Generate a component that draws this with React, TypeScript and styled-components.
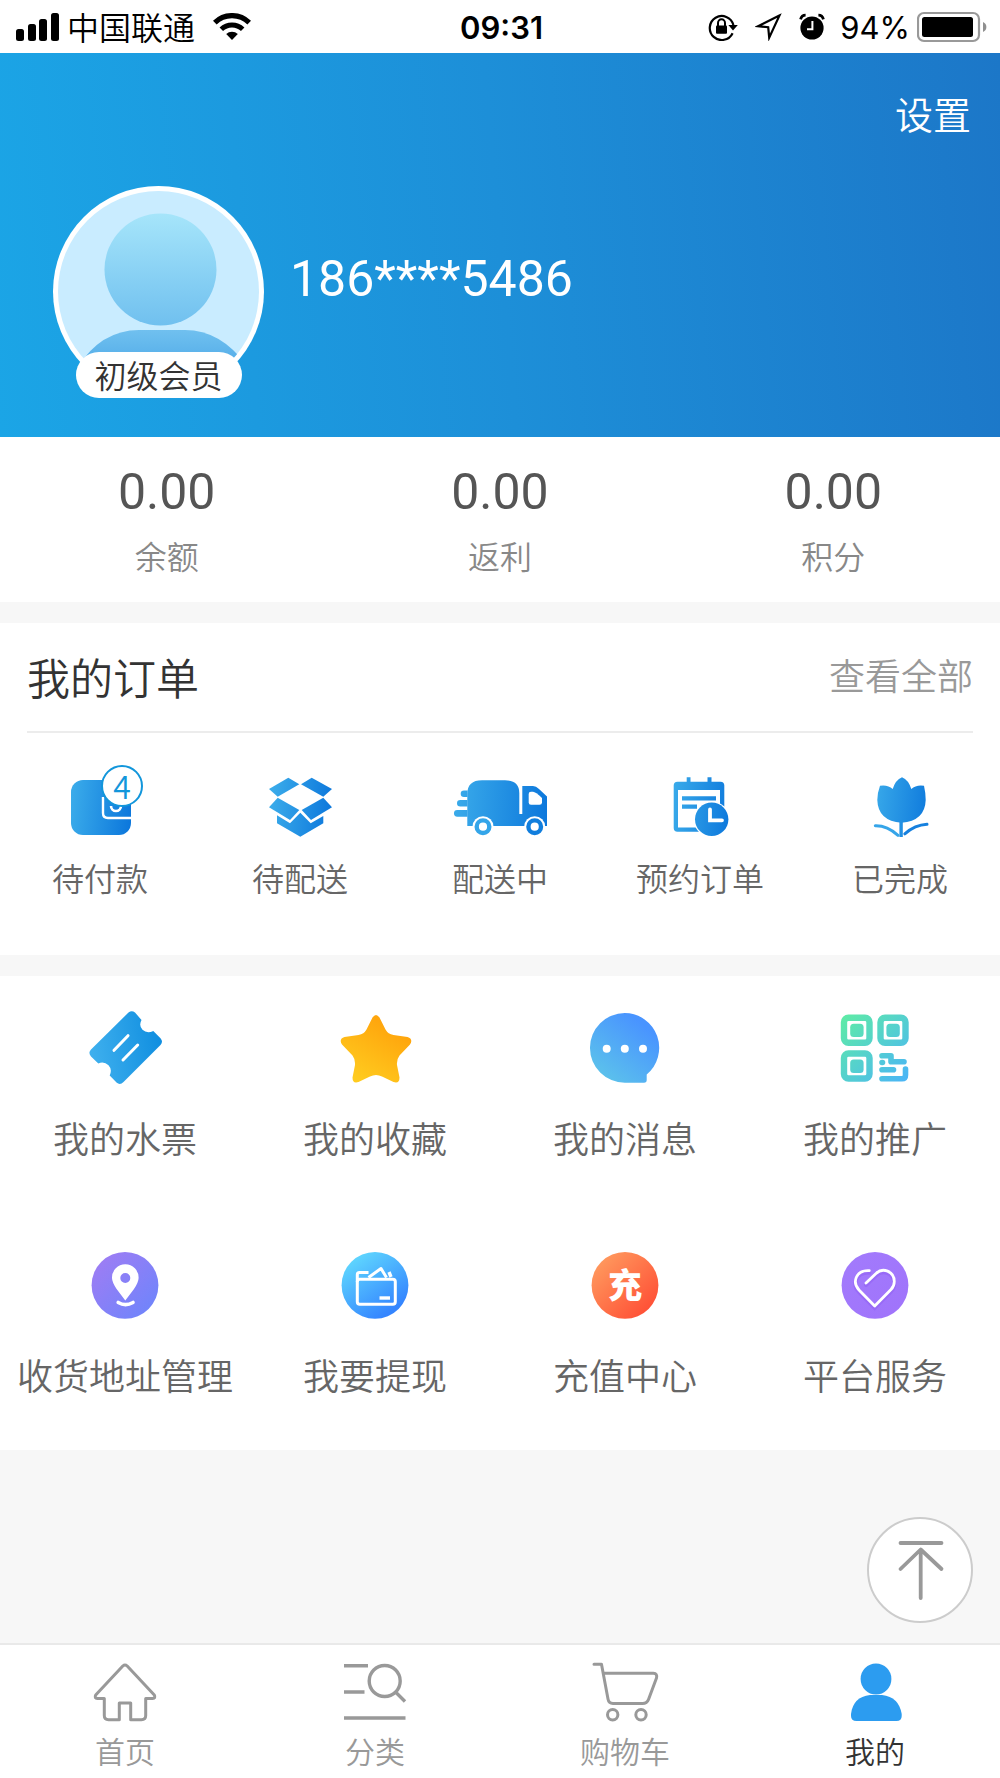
import React from "react";
import styled, { createGlobalStyle, css } from "styled-components";

const GlobalStyle = createGlobalStyle`
  *, *::before, *::after { box-sizing: border-box; }
  body {
    margin: 0;
    background: #f7f7f7;
    font-family: Inter, "Noto Sans CJK SC", sans-serif;
    color: #333;
  }
  a { color: inherit; text-decoration: none; }
  button { font: inherit; padding: 0; border: 0; background: none; cursor: pointer; }
  svg { display: block; flex: none; }
`;

const cjkLight = css`
  font-family: "Noto Sans CJK SC", sans-serif;
  font-weight: 350;
`;

const Page = styled.div`
  min-height: 100vh;
  display: flex;
  flex-direction: column;
`;

const StatusBar = styled.div`
  display: grid;
  grid-template-columns: 1fr auto 1fr;
  align-items: center;
  height: 53px;
  padding: 0 13px 0 16px;
  background: #fff;
  color: #000;
`;

const StatusGroup = styled.div<{ $end?: boolean }>`
  display: flex;
  align-items: center;
  justify-content: ${(p) => (p.$end ? "flex-end" : "flex-start")};
`;

const StatusIcons = styled.div`
  display: flex;
  align-items: center;
  gap: 17px;
`;

const Carrier = styled.span`
  ${cjkLight}
  margin: 0 18px 0 7px;
  padding-bottom: 2px;
  font-size: 32px;
  line-height: 48px;
`;

const Clock = styled.time`
  font-size: 31px;
  font-weight: 600;
  line-height: 48px;
  padding-top: 3px;
`;

const BatteryLevel = styled.span`
  margin: 3px 7px 0 15px;
  font-size: 31px;
  line-height: 48px;
`;

const Header = styled.header`
  padding: 35px 29px 40px 53px;
  background: linear-gradient(85deg, #1ba5e6 0%, #1d8fd8 50%, #1c77c8 100%);
  color: #fff;
`;

const HeaderActions = styled.div`
  display: flex;
  justify-content: flex-end;
  margin-bottom: 48px;
`;

const SettingsLink = styled.a`
  ${cjkLight}
  font-size: 38px;
  line-height: 50px;
`;

const Profile = styled.div`
  display: flex;
  align-items: center;
  gap: 26px;
`;

const Avatar = styled.div`
  position: relative;
  width: 211px;
  height: 211px;
`;

const LevelBadge = styled.span`
  ${cjkLight}
  position: absolute;
  left: 50%;
  bottom: -1px;
  transform: translateX(-50%);
  padding: 0 19px 2px;
  border-radius: 23px;
  background: #fff;
  color: #333;
  font-size: 32px;
  line-height: 44px;
  white-space: nowrap;
`;

const Phone = styled.h1`
  margin: 0;
  padding-bottom: 26px;
  font-family: Roboto, sans-serif;
  font-size: 50px;
  font-weight: 400;
  line-height: 60px;
`;

const Section = styled.section`
  background: #fff;
  margin-bottom: 21px;
`;

const Stats = styled(Section)`
  display: grid;
  grid-template-columns: repeat(3, 1fr);
  padding: 25px 0 23px;
`;

const Stat = styled.a`
  display: flex;
  flex-direction: column;
  align-items: center;
  gap: 9px;
`;

const StatValue = styled.strong`
  font-family: Roboto, sans-serif;
  font-size: 50px;
  font-weight: 400;
  line-height: 60px;
  color: #555;
`;

const StatLabel = styled.span`
  ${cjkLight}
  font-size: 32px;
  line-height: 48px;
  color: #888;
`;

const SectionHead = styled.div`
  display: flex;
  align-items: center;
  justify-content: space-between;
  margin: 0 27px;
  height: 110px;
  border-bottom: 2px solid #ececec;
`;

const SectionTitle = styled.h2`
  ${cjkLight}
  margin: 0;
  padding-bottom: 3px;
  font-size: 43px;
  line-height: 60px;
  color: #333;
`;

const MoreLink = styled.a`
  ${cjkLight}
  padding-bottom: 6px;
  font-size: 36px;
  line-height: 60px;
  color: #999;
`;

const OrderList = styled.nav`
  display: grid;
  grid-template-columns: repeat(5, 1fr);
  padding: 34px 0 56px;
`;

const OrderItem = styled.a`
  ${cjkLight}
  display: flex;
  flex-direction: column;
  align-items: center;
  gap: 8px;
  font-size: 32px;
  line-height: 44px;
  color: #666;
`;

const IconBox = styled.span`
  position: relative;
`;

const Count = styled.span`
  position: absolute;
  top: -2px;
  right: 12px;
  width: 42px;
  height: 42px;
  border: 2px solid #1296db;
  border-radius: 50%;
  background: #fff;
  color: #1296db;
  font-size: 32px;
  line-height: 36px;
  text-align: center;
`;

const ServiceList = styled(Section)`
  display: grid;
  grid-template-columns: repeat(4, 1fr);
  margin-bottom: 0;
`;

const ServiceItem = styled.a`
  ${cjkLight}
  display: flex;
  flex-direction: column;
  align-items: center;
  gap: 25px;
  padding: 32px 0 52px;
  font-size: 36px;
  line-height: 48px;
  color: #666;
  white-space: nowrap;
`;

const TopButton = styled.button`
  position: fixed;
  right: 27px;
  bottom: 155px;
  width: 106px;
  height: 106px;
  border: 2px solid #ccc;
  border-radius: 50%;
  background: #fff;
`;

const TabBar = styled.nav`
  position: sticky;
  bottom: 0;
  display: grid;
  grid-template-columns: repeat(4, 1fr);
  margin-top: auto;
  border-top: 2px solid #e9e9e9;
  background: #fff;
`;

const Tab = styled.a<{ $active?: boolean }>`
  ${cjkLight}
  display: flex;
  flex-direction: column;
  align-items: center;
  gap: 6px;
  padding: 15px 0 8px;
  font-size: 30px;
  line-height: 40px;
  color: ${(p) => (p.$active ? "#333" : "#999")};
`;

/* ---------- status bar drawings ---------- */

const SignalIcon = () => (
  <svg width="44" height="28" viewBox="0 0 44 28" aria-hidden="true">
    <rect x="0" y="16" width="8" height="12" rx="2.5" />
    <rect x="12" y="11" width="8" height="17" rx="2.5" />
    <rect x="23" y="6" width="8" height="22" rx="2.5" />
    <rect x="35" y="0" width="8" height="28" rx="2.5" />
  </svg>
);

const WifiIcon = () => (
  <svg width="38" height="28" viewBox="0 0 38 28" fill="none" stroke="#000" aria-hidden="true">
    <path d="M1.8 9.6A24.6 24.6 0 0 1 36.2 9.6" strokeWidth="5.2" />
    <path d="M8.3 16.2A15.4 15.4 0 0 1 29.7 16.2" strokeWidth="5" />
    <path d="M13.2 21A8.6 8.6 0 0 1 24.8 21L19 27Z" fill="#000" stroke="none" />
  </svg>
);

const RotationLockIcon = () => (
  <svg width="30" height="28" viewBox="0 0 30 28" aria-hidden="true">
    <path d="M24.6 20.2A12 12 0 1 1 25.4 12" fill="none" stroke="#000" strokeWidth="2.2" />
    <path d="M20.4 12H29.8L25 17.6Z" />
    <rect x="8" y="12.4" width="11" height="8.4" rx="1" />
    <path d="M10 13V10a3.5 3.8 0 0 1 7 0v3" fill="none" stroke="#000" strokeWidth="2" />
  </svg>
);

const LocationArrowIcon = () => (
  <svg width="27" height="28" viewBox="0 0 27 28" aria-hidden="true">
    <path d="M24.4 2.6L3 13.2L13.2 14.2L14.2 24.6Z" fill="none" stroke="#000" strokeWidth="2.2" />
  </svg>
);

const AlarmIcon = () => (
  <svg width="26" height="28" viewBox="0 0 26 28" aria-hidden="true">
    <circle cx="13" cy="15" r="11.6" />
    <path d="M1.6 6.4Q2.6 2.2 6.6 2.2M24.4 6.4Q23.4 2.2 19.4 2.2" fill="none" stroke="#000" strokeWidth="2.8" />
    <path d="M13.4 8V16.2H8" fill="none" stroke="#fff" strokeWidth="2" />
  </svg>
);

const BatteryIcon = () => (
  <svg width="70" height="32" viewBox="0 0 70 32" aria-hidden="true">
    <rect x="1" y="2" width="61" height="28" rx="6" fill="none" stroke="#999" strokeWidth="2.2" />
    <rect x="5" y="6" width="51" height="20" rx="2.5" />
    <path d="M66 11Q69.4 12.6 69.4 16T66 21Z" fill="#8f8f8f" />
  </svg>
);

/* ---------- avatar ---------- */

const AvatarPicture = () => (
  <svg width="211" height="211" viewBox="0 0 211 211" role="img" aria-label="头像">
    <defs>
      <linearGradient id="avatar-head" x1="0" y1="0" x2="0" y2="1">
        <stop offset="0" stopColor="#a6e5fa" />
        <stop offset="1" stopColor="#70c0ef" />
      </linearGradient>
      <linearGradient id="avatar-body" x1="0" y1="0" x2="0" y2="1">
        <stop offset="0" stopColor="#70c0ef" />
        <stop offset="0.6" stopColor="#4eaae8" />
      </linearGradient>
      <clipPath id="avatar-clip">
        <circle cx="105.5" cy="105.5" r="100.5" />
      </clipPath>
    </defs>
    <circle cx="105.5" cy="105.5" r="105.5" fill="#fff" />
    <g clipPath="url(#avatar-clip)">
      <rect width="211" height="211" fill="#c9ecff" />
      <circle cx="107.5" cy="83.5" r="56" fill="url(#avatar-head)" />
      <path d="M24 182Q48 144 86 144H132Q168 144 194 180V211H24Z" fill="url(#avatar-body)" />
    </g>
  </svg>
);

/* ---------- order icons ---------- */

const OrderSvg = ({ id, children }: { id: string; children: React.ReactNode }) => (
  <svg width="110" height="80" viewBox="0 0 110 80" fill={`url(#${id})`} aria-hidden="true">
    <defs>
      <linearGradient id={id} gradientUnits="userSpaceOnUse" x1={id === "g-truck" ? 9 : 26} y1="36" x2={id === "g-truck" ? 102 : 86} y2="42">
        <stop offset="0" stopColor="#3aabea" />
        <stop offset="1" stopColor="#0d78dc" />
      </linearGradient>
    </defs>
    {children}
  </svg>
);

const WalletIcon = () => (
  <OrderSvg id="g-wallet">
    <rect x="26" y="13" width="60" height="55" rx="12" />
    <path d="M86 51H63Q58 51 58 46V30" fill="none" stroke="#fff" strokeWidth="2.4" />
    <path d="M66 39A5 5 0 0 0 76 39" fill="none" stroke="#fff" strokeWidth="2.6" />
  </OrderSvg>
);

const BoxIcon = () => (
  <OrderSvg id="g-box">
    <path d="M43.3 10.7L54.3 17.3L32.7 29.7L24 22Z" />
    <path d="M66.7 10.7L87 22L78.3 29.7L56 17.3Z" />
    <path d="M32.7 30.7L54.3 43L45 53L24 40.3Z" />
    <path d="M78.3 30.7L87 40.3L66 53L56.7 43Z" />
    <path d="M32 48.3L45 56.3L55.3 45.7L65.7 56.3L78.3 49V56.3L55.3 69.7L32 56.3Z" />
  </OrderSvg>
);

const TruckIcon = () => (
  <OrderSvg id="g-truck">
    <path d="M22.3 59V27Q22.3 13.3 37 13.3H60Q74.3 13.3 74.3 26V47H77.3V19H88Q91 19 94 22L102 29.5V59Z" />
    <path d="M22.5 23.4H19A3.3 3.3 0 0 0 19 30H22.5V33H15.3A3.3 3.3 0 0 0 15.3 39.6H22.5V43H12.3A3.3 3.3 0 0 0 12.3 49.7H22.5Z" />
    <path d="M83.7 27Q83.7 24.7 86 24.7H88Q90.5 24.7 97 31V35.5Q97 37.700 94.5 37.7H86Q83.7 37.7 83.7 35.5Z" fill="#fff" />
    <circle cx="38" cy="59.7" r="10.5" fill="#fff" />
    <circle cx="89.7" cy="59.7" r="10.5" fill="#fff" />
    <circle cx="38" cy="59.7" r="6.3" fill="none" stroke="#34a5e9" strokeWidth="4.4" />
    <circle cx="89.7" cy="59.7" r="6.3" fill="none" stroke="#117edd" strokeWidth="4.4" />
  </OrderSvg>
);

const CalendarIcon = () => (
  <OrderSvg id="g-cal">
    <path
      fillRule="evenodd"
      d="M32.5 14.7H41.7V10.3H45.5V14.7H62.5V10.3H66.5V14.7H75.5Q79.3 14.7 79.3 18.5V61Q79.3 64.7 75.5 64.7H32.5Q28.7 64.7 28.7 61V18.5Q28.7 14.7 32.5 14.7ZM33 23V60.5H75V23Z"
    />
    <path d="M37 29.3H71V33.5H37ZM37 37.6H52V41.8H37Z" />
    <circle cx="66.7" cy="52.3" r="18" fill="#fff" />
    <circle cx="66.7" cy="52.3" r="16.7" />
    <path d="M65 42.5V53.3H77" fill="none" stroke="#fff" strokeWidth="3.8" strokeLinecap="round" />
  </OrderSvg>
);

const TulipIcon = () => (
  <OrderSvg id="g-tulip">
    <path d="M35 18.7Q43 17.5 47.7 22Q50.5 13 57 10.3Q63.5 13 66.3 22Q71 17.5 79 18.7Q80.7 26 80.7 33Q80 54 56.5 55.7Q33 54 32.3 33Q32.3 26 35 18.7Z" />
    <path d="M54.4 55H57.8V70H54.4Z" />
    <path d="M30.3 58.8Q42 58.5 53 68.3" fill="none" stroke="#36a5e9" strokeWidth="3" strokeLinecap="round" />
    <path d="M82 57.3Q70 58 59.8 66.8" fill="none" stroke="#1680de" strokeWidth="3" strokeLinecap="round" />
  </OrderSvg>
);

/* ---------- service icons ---------- */

type ServiceSvgProps = {
  id: string;
  from: string;
  to: string;
  dir?: [number, number, number, number];
  children: React.ReactNode;
};

const ServiceSvg = ({ id, from, to, dir = [25, 15, 75, 65], children }: ServiceSvgProps) => (
  <svg width="100" height="80" viewBox="0 0 100 80" fill={`url(#${id})`} aria-hidden="true">
    <defs>
      <linearGradient id={id} gradientUnits="userSpaceOnUse" x1={dir[0]} y1={dir[1]} x2={dir[2]} y2={dir[3]}>
        <stop offset="0" stopColor={from} />
        <stop offset="1" stopColor={to} />
      </linearGradient>
    </defs>
    {children}
  </svg>
);

const TicketIcon = () => (
  <ServiceSvg id="s-ticket" from="#3fb0ee" to="#118fe0" dir={[15, 45, 85, 34]}>
    <path d="M53.5 4.5Q56.7 1.8 60 4.5L66.5 12Q63.5 17.5 67.5 21.8Q72 26 78.3 23L85.5 30.2Q88.5 33.5 85.5 37L48.5 74Q45 77.5 41.5 74.5L34.7 67.5Q37.5 61.5 33.5 57.3Q29 53 23.3 55.5L16 48.5Q12.8 44.7 16 41.5Z" />
    <path d="M39 42.3L53 27.7M48 52L62.7 37" fill="none" stroke="#fff" strokeWidth="3" strokeLinecap="round" />
  </ServiceSvg>
);

const StarIcon = () => (
  <ServiceSvg id="s-star" from="#ffa60d" to="#ffcb1f" dir={[66, 20, 34, 72]}>
    <path d="M47.500 9.500Q51 4.500 54.500 9.500L60.500 21.500Q63 26 68.500 27L82.500 29Q88.500 31 85 36.500L74.500 47.500Q71.500 51.500 72 57L74.500 69.500Q74.500 76 68.500 74L57 68.500Q51 65.500 45 68.500L33.500 74Q27.500 76 27.500 69.500L30 57Q30.500 51.500 27.500 47.500L17 36.500Q13.500 31 19.500 29L33.500 27Q39 26 41.500 21.500Z" />
  </ServiceSvg>
);

const MessageIcon = () => (
  <ServiceSvg id="s-msg" from="#4994ff" to="#5bc0ec" dir={[70, 18, 30, 68]}>
    <path d="M49.8 5A34.8 34.8 0 0 1 71.7 66.5V72Q71.7 74.7 69 74.7H49.8A34.8 34.8 0 0 1 49.8 5Z" />
    <circle cx="31.7" cy="40.7" r="4" fill="#fff" />
    <circle cx="49.8" cy="40.7" r="4" fill="#fff" />
    <circle cx="68" cy="40.7" r="4" fill="#fff" />
  </ServiceSvg>
);

const QrIcon = () => (
  <ServiceSvg id="s-qr" from="#5eeaa8" to="#4bb6f5" dir={[18, 10, 80, 72]}>
    <g fill="none" stroke="url(#s-qr)" strokeWidth="6.4">
      <rect x="19" y="9.7" width="25.5" height="25" rx="4.5" />
      <rect x="55.5" y="9.7" width="25" height="25" rx="4.5" />
      <rect x="19" y="45.5" width="25.5" height="25" rx="4.5" />
    </g>
    <rect x="25.2" y="15.7" width="13.4" height="13.4" rx="3.5" />
    <rect x="61.4" y="15.7" width="13.4" height="13.4" rx="3.5" />
    <rect x="25.2" y="51.6" width="13.4" height="13.4" rx="3.5" />
    <g fill="none" stroke="url(#s-qr)" strokeWidth="5.6" strokeLinecap="round" strokeLinejoin="round">
      <path d="M57 47.8H66V53.8H79" />
      <path d="M57 54.5H57.5M57 61.8H68.5" />
      <path d="M57 70.8H77Q80.5 70.8 80.5 67V61" />
    </g>
  </ServiceSvg>
);

const AddressIcon = () => (
  <ServiceSvg id="s-addr" from="#9c7df4" to="#7184fb">
    <circle cx="50" cy="40.3" r="33.4" />
    <path
      fillRule="evenodd"
      d="M50.3 19.3A13.3 13.3 0 0 1 63.6 33Q63.6 37 59 44L50.3 55.5L41.6 44Q37 37 37 33A13.3 13.3 0 0 1 50.3 19.3ZM50.3 28A5 5 0 1 0 50.3 38A5 5 0 1 0 50.3 28Z"
      fill="#fff"
    />
    <path d="M43.2 57.5Q50.5 61.8 58 57.5" fill="none" stroke="#fff" strokeWidth="3.6" strokeLinecap="round" />
  </ServiceSvg>
);

const WithdrawIcon = () => (
  <ServiceSvg id="s-draw" from="#5dd3fe" to="#3485ff" dir={[30, 15, 66, 66]}>
    <circle cx="50" cy="40.3" r="33.4" />
    <g fill="none" stroke="#fff" strokeWidth="3" strokeLinejoin="round">
      <rect x="32.3" y="34.3" width="38" height="25" rx="2.5" />
      <path d="M32.3 37V29.5Q32.3 27.5 34.5 27.5H43.5" />
      <path d="M43.5 32.5L56 23.5L61.5 32.5" />
      <path d="M64 27L66 32" strokeWidth="3.4" />
      <path d="M54.5 53H65" strokeWidth="3.4" />
    </g>
  </ServiceSvg>
);

const RechargeIcon = () => (
  <ServiceSvg id="s-charge" from="#ff985d" to="#ff5036">
    <circle cx="50" cy="40.3" r="33.4" />
    <text x="50" y="53" textAnchor="middle" fill="#fff" fontFamily="Noto Sans CJK SC, sans-serif" fontSize="34" fontWeight="900">
      充
    </text>
  </ServiceSvg>
);

const HeartIcon = () => (
  <ServiceSvg id="s-heart" from="#a27afc" to="#a074fb">
    <circle cx="50" cy="40.3" r="33.4" />
    <path
      d="M41 40L51 30.500C57.5 24 69.3 28 69.3 38.500C69.3 42 68 44.500 66 46.500L49.7 63L34 47C27 39.500 30.500 27 44.300 27.700"
      fill="none"
      stroke="#9262f4"
      strokeWidth="4"
      strokeLinecap="round"
      opacity="0.6"
    />
    <path
      d="M41 38L51 28.5C57.5 22 69.3 26 69.3 36.5C69.3 40 68 42.5 66 44.5L49.7 61L34 45C27 37.5 30.5 25 44.3 25.7"
      fill="none"
      stroke="#fff"
      strokeWidth="2.8"
      strokeLinecap="round"
      strokeLinejoin="round"
    />
  </ServiceSvg>
);

/* ---------- tab icons ---------- */

const TabSvg = ({ children }: { children: React.ReactNode }) => (
  <svg
    width="80"
    height="64"
    viewBox="0 0 80 64"
    fill="none"
    stroke="#999"
    strokeWidth="3"
    strokeLinecap="round"
    strokeLinejoin="round"
    aria-hidden="true"
  >
    {children}
  </svg>
);

const HomeIcon = () => (
  <TabSvg>
    <path d="M37.8 6Q40 4 42.2 6L69.3 35Q71 38.3 67.5 38.5H60.7V55.5Q60.7 59.7 56.5 59.7H45.7V43H34.3V59.7H23.5Q19.3 59.7 19.3 55.5V38.5H12.5Q9 38.3 10.7 35Z" />
  </TabSvg>
);

const CategoryIcon = () => (
  <TabSvg>
    <g strokeWidth="3.4" strokeLinecap="butt">
      <path d="M9 5.7H33M9 32H29.5M9 58H70.5" />
      <circle cx="49.7" cy="21" r="15.5" />
      <path d="M60.5 32L70 41.5" />
    </g>
  </TabSvg>
);

const CartIcon = () => (
  <TabSvg>
    <path d="M9 4.3H16.5L23 39Q23.8 43.5 28 43.5H57.5Q62 43.5 63.5 39.5L71.5 18Q72.5 13.3 68.5 13.3H18.5" />
    <circle cx="27.7" cy="54.7" r="5.2" />
    <circle cx="56" cy="54.7" r="5.2" />
  </TabSvg>
);

const PersonIcon = () => (
  <TabSvg>
    <g fill="#2c9cf0" stroke="none">
      <circle cx="41" cy="19" r="15.4" />
      <path d="M35 35H47Q64 37 66.7 54V56Q66.7 61 61.5 61H21.5Q16 61 16 56V54Q18 37 35 35Z" />
    </g>
  </TabSvg>
);

const stats = [
  { label: "余额", value: "0.00" },
  { label: "返利", value: "0.00" },
  { label: "积分", value: "0.00" },
];

const orders = [
  { label: "待付款", Icon: WalletIcon, count: 4 },
  { label: "待配送", Icon: BoxIcon },
  { label: "配送中", Icon: TruckIcon },
  { label: "预约订单", Icon: CalendarIcon },
  { label: "已完成", Icon: TulipIcon },
];

const services = [
  { label: "我的水票", Icon: TicketIcon },
  { label: "我的收藏", Icon: StarIcon },
  { label: "我的消息", Icon: MessageIcon },
  { label: "我的推广", Icon: QrIcon },
  { label: "收货地址管理", Icon: AddressIcon },
  { label: "我要提现", Icon: WithdrawIcon },
  { label: "充值中心", Icon: RechargeIcon },
  { label: "平台服务", Icon: HeartIcon },
];

const tabs = [
  { label: "首页", Icon: HomeIcon },
  { label: "分类", Icon: CategoryIcon },
  { label: "购物车", Icon: CartIcon },
  { label: "我的", Icon: PersonIcon, active: true },
];

export default function App() {
  return (
    <Page>
      <GlobalStyle />
      <StatusBar>
        <StatusGroup>
          <SignalIcon />
          <Carrier>中国联通</Carrier>
          <WifiIcon />
        </StatusGroup>
        <Clock>09:31</Clock>
        <StatusGroup $end>
          <StatusIcons>
            <RotationLockIcon />
            <LocationArrowIcon />
            <AlarmIcon />
          </StatusIcons>
          <BatteryLevel>94%</BatteryLevel>
          <BatteryIcon />
        </StatusGroup>
      </StatusBar>

      <Header>
        <HeaderActions>
          <SettingsLink href="#settings">设置</SettingsLink>
        </HeaderActions>
        <Profile>
          <Avatar>
            <AvatarPicture />
            <LevelBadge>初级会员</LevelBadge>
          </Avatar>
          <Phone>186****5486</Phone>
        </Profile>
      </Header>

      <Stats>
        {stats.map((s) => (
          <Stat key={s.label} href="#account">
            <StatValue>{s.value}</StatValue>
            <StatLabel>{s.label}</StatLabel>
          </Stat>
        ))}
      </Stats>

      <Section>
        <SectionHead>
          <SectionTitle>我的订单</SectionTitle>
          <MoreLink href="#orders">查看全部</MoreLink>
        </SectionHead>
        <OrderList>
          {orders.map(({ label, Icon, count }) => (
            <OrderItem key={label} href="#orders">
              <IconBox>
                <Icon />
                {count ? <Count>{count}</Count> : null}
              </IconBox>
              {label}
            </OrderItem>
          ))}
        </OrderList>
      </Section>

      <ServiceList>
        {services.map(({ label, Icon }) => (
          <ServiceItem key={label} href="#service">
            <Icon />
            {label}
          </ServiceItem>
        ))}
      </ServiceList>

      <TopButton aria-label="回到顶部" onClick={() => window.scrollTo({ top: 0, behavior: "smooth" })}>
        <svg
          width="102"
          height="102"
          viewBox="2 2 102 102"
          fill="none"
          stroke="#999"
          strokeWidth="3.8"
          strokeLinecap="round"
          strokeLinejoin="round"
          aria-hidden="true"
        >
          <path d="M33.5 26H74.5M33.5 52L53.7 32.5L74.5 52M53.7 33V81" />
        </svg>
      </TopButton>

      <TabBar>
        {tabs.map(({ label, Icon, active }) => (
          <Tab key={label} href="#tab" $active={active} aria-current={active ? "page" : undefined}>
            <Icon />
            {label}
          </Tab>
        ))}
      </TabBar>
    </Page>
  );
}
